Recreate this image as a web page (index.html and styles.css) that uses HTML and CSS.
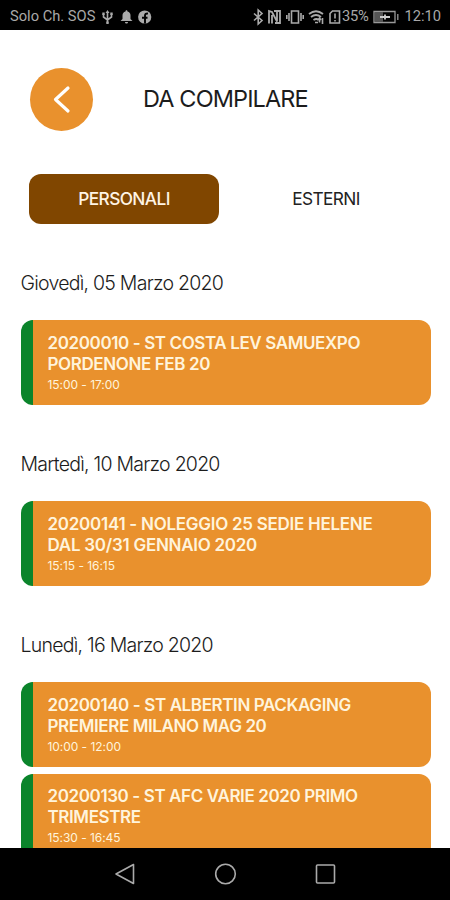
FILE: index.html
```html
<!DOCTYPE html>
<html lang="it">
<head>
<meta charset="utf-8">
<title>Da compilare</title>
<link rel="stylesheet" href="styles.css">
</head>
<body>
<div class="status-bar">
  <span class="carrier">Solo Ch. SOS</span>
  <svg class="left-icons" width="54" height="18" viewBox="0 0 54 18" fill="none" stroke="#aaa" stroke-width="1.6">
    <path d="M6.500 4v11M2.500 6v3l4 3 4-3V6"/><path d="M4.500 5l2-3 2 3z M5.300 13.500h2.400v2.500H5.300z M1.300 4.500h2.400v2.500H1.300z M9.300 4.500h2.400v2.500H9.300z" fill="#aaa" stroke="none"/>
    <path d="M19.500 13l2-2V7.500c0-2 1-3.500 3-4 0-1.600 2-1.600 2 0 2 .5 3 2 3 4V11l2 2zM24 14h3c0 2-3 2-3 0z" fill="#aaa" stroke="none"/>
    <circle cx="43.700" cy="9" r="6.600" fill="#aaa" stroke="none"/><path d="M44 15.500V7.500q0-2.300 3-1.900M41 9.700h5.500" stroke="#000" stroke-width="1.900"/>
  </svg>
  <svg class="right-icons" width="88" height="18" viewBox="0 0 88 18" fill="none" stroke="#aaa" stroke-width="1.600">
    <path d="M1 5.500l8 7L5.200 16V2L9 5.500l-8 7"/>
    <path d="M16 15.500V3l3 1 5 9.500V3M19 15.500V7M21 3h6v12h-5" stroke-width="1.800"/>
    <path d="M38.500 3h7v12h-7zM36 5v8M33.800 7v4M48 5v8M50.200 7v4"/>
    <path d="M56 6q7-5.500 14 0M58 9q5-4 10 0M60.500 12q3-2 5 0" stroke-width="1.800"/><path d="M62 14.500h3M66.500 10.500v4M69.500 10v6M65 12l1.500-2 1.500 2"/>
    <path d="M79.500 3h7v12h-9.500V5.500zM82 5.500v5M82 12v1.600"/>
  </svg>
  <span class="percent">35%</span>
  <svg class="battery" width="26" height="14" viewBox="0 0 26 14" fill="none" stroke="#999" stroke-width="1.300">
    <path d="M1 1.500h21v11H1zM24.800 4v6"/><path d="M2 2h8v10H2z" fill="#555" stroke="none"/><path d="M7 7h10M12 4.500v5" stroke="#ccc" stroke-width="1.800"/>
  </svg>
  <span class="clock">12:10</span>
</div>
<main class="screen">
  <header class="header">
    <button class="back" aria-label="Indietro"><svg width="63" height="63" viewBox="0 0 63 63" fill="none" stroke="#fff" stroke-width="3.200" stroke-linecap="round" stroke-linejoin="round"><path d="M38 20L25.500 31.500l12.500 11.500"/></svg></button>
    <h1 class="title">DA COMPILARE</h1>
  </header>
  <nav class="tabs">
    <button class="tab tab-active">PERSONALI</button>
    <button class="tab">ESTERNI</button>
  </nav>
  <section class="day">
    <h2 class="date">Giovedì, 05 Marzo 2020</h2>
    <article class="card"><h3>20200010 - ST COSTA LEV SAMUEXPO<br>PORDENONE FEB 20</h3><p>15:00 - 17:00</p></article>
  </section>
  <section class="day">
    <h2 class="date">Martedì, 10 Marzo 2020</h2>
    <article class="card card-wide"><h3>20200141 - NOLEGGIO 25 SEDIE HELENE<br>DAL 30/31 GENNAIO 2020</h3><p>15:15 - 16:15</p></article>
  </section>
  <section class="day">
    <h2 class="date">Lunedì, 16 Marzo 2020</h2>
    <article class="card"><h3>20200140 - ST ALBERTIN PACKAGING<br>PREMIERE MILANO MAG 20</h3><p>10:00 - 12:00</p></article>
    <article class="card"><h3>20200130 - ST AFC VARIE 2020 PRIMO<br>TRIMESTRE</h3><p>15:30 - 16:45</p></article>
  </section>
</main>
<footer class="nav-bar">
  <svg width="22" height="24" viewBox="0 0 22 24"><path d="M19.500 2.500v19L2 12z"/></svg>
  <svg width="24" height="24" viewBox="0 0 24 24"><circle cx="12.500" cy="12" r="9.800"/></svg>
  <svg width="22" height="22" viewBox="0 0 22 22"><rect x="2.500" y="2" width="18" height="18" rx="1"/></svg>
</footer>
</body>
</html>
```
FILE: styles.css
```css
* { box-sizing: border-box; margin: 0; padding: 0; }
body {
  width: 450px;
  height: 900px;
  display: flex;
  flex-direction: column;
  overflow: hidden;
  background: #fff;
  color: #1c1c1c;
  font-family: Inter, "Liberation Sans", sans-serif;
}
button { border: 0; background: none; font: inherit; color: inherit; }
svg { display: block; flex: none; }
.status-bar {
  flex: none;
  height: 30px;
  padding: 3px 9px 0 10px;
  display: flex;
  align-items: center;
  background: #000;
  color: #a9a9a9;
  font: 14.700px/27px Roboto, sans-serif;
  white-space: nowrap;
}
.carrier { width: 91px; }
.left-icons { margin-right: 98px; }
.percent { width: 30px; margin-left: 1px; letter-spacing: -0.200px; }
.battery { margin-left: 1px; }
.clock { margin-left: auto; }
.screen { flex: 1; min-height: 0; overflow: hidden; }
.header {
  display: flex;
  align-items: center;
  gap: 50px;
  padding: 38px 30px 0;
}
.back { width: 63px; height: 63px; border-radius: 50%; background: #e9912d; }
.title { padding-bottom: 1px; font-size: 23.500px; line-height: 30px; font-weight: 400; letter-spacing: -0.880px; }
.tabs { display: flex; padding: 43px 29px 0; gap: 12px; }
.tab { width: 190px; height: 50px; padding-bottom: 2px; border-radius: 12px; font-size: 17.300px; letter-spacing: -0.600px; color: #222; }
.tab-active { background: #804600; color: #fff4e4; font-weight: 500; }
.day { padding: 0 19.500px 0 20.500px; }
.date { padding-top: 45px; height: 96px; font-size: 19.500px; line-height: 28px; font-weight: 300; letter-spacing: -0.750px; white-space: nowrap; }
.card {
  height: 85px;
  padding: 12.500px 12px 0 15px;
  border-left: 12.500px solid #0b842b;
  border-radius: 12px;
  background: #e9912d;
  color: #fff4dc;
  white-space: nowrap;
}
.card + .card { margin-top: 6.500px; }
.card h3 { font-size: 17px; line-height: 21px; font-weight: 600; letter-spacing: -0.390px; }
.card-wide h3 { letter-spacing: -0.270px; }
.card p { font-size: 12px; line-height: 20px; letter-spacing: -0.050px; }
.nav-bar {
  flex: none;
  height: 52px;
  display: flex;
  justify-content: center;
  align-items: center;
  gap: 77px;
  background: #000;
}
.nav-bar svg { fill: none; stroke: #aaa; stroke-width: 1.600; stroke-linejoin: round; }
```
